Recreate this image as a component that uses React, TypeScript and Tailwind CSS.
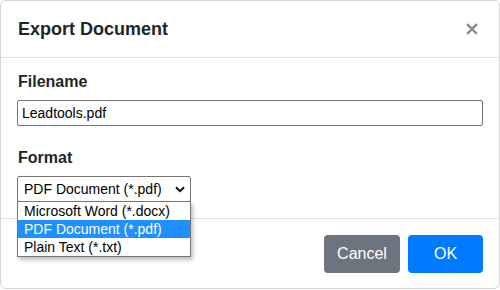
import { FC } from 'react';

const options = ['Microsoft Word (*.docx)', 'PDF Document (*.pdf)', 'Plain Text (*.txt)'];

const App: FC = () => {
  return (
    <div className="w-[500px] h-[290px] bg-white" style={{ fontFamily: '"Liberation Sans", Arial, sans-serif' }}>
      <div className="w-[500px] h-[289px] border border-[#d4d4d4] rounded-[6px] flex flex-col text-[#212529]">
        {/* header */}
        <div className="h-[57px] flex items-center justify-between pl-[17px] pr-[17px] border-b border-[#dee2e6]">
          <h2 className="text-[18px] font-bold leading-none">Export Document</h2>
          <button className="w-[20px] h-[20px] flex items-center justify-center text-[#8a8a8a]">
            <svg width="12" height="12" viewBox="0 0 12 12">
              <path d="M2 2 L10 10 M10 2 L2 10" stroke="currentColor" strokeWidth="2.4" strokeLinecap="square" />
            </svg>
          </button>
        </div>

        {/* body */}
        <div className="flex-1 px-[16px] pt-[12px] pb-[16px]">
          <div className="text-[16px] font-bold leading-[24px] mb-[6px] pl-[1px]">Filename</div>
          <div className="h-[26px] border border-[#767676] rounded-[2px] flex items-center px-[4px] text-[14px] text-black">
            Leadtools.pdf
          </div>

          <div className="text-[16px] font-bold leading-[24px] mt-[20px] mb-[6px] pl-[1px]">Format</div>
          <div className="relative w-[174px]">
            <div className="h-[26px] border border-[#767676] rounded-[2px] flex items-center justify-between pl-[6px] pr-[5px] text-[14px] text-black">
              <span>PDF Document (*.pdf)</span>
              <svg width="10" height="7" viewBox="0 0 10 7">
                <path d="M1 1.2 L5 5.2 L9 1.2" fill="none" stroke="#111" strokeWidth="2" />
              </svg>
            </div>
            <div className="absolute left-0 top-[25px] w-[174px] bg-white border border-[#767676] shadow-[2px_3px_4px_rgba(0,0,0,0.25)] z-10">
              {options.map((o, i) => (
                <div
                  key={o}
                  className={
                    i === 1
                      ? 'h-[18px] leading-[18px] pl-[6px] text-[14px] bg-[#1e90ff] text-white'
                      : 'h-[18px] leading-[18px] pl-[6px] text-[14px] text-black'
                  }
                >
                  {o}
                </div>
              ))}
            </div>
          </div>
        </div>

        {/* footer */}
        <div className="border-t border-[#dee2e6] flex justify-end gap-[8px] pt-[16px] pb-[15px] pr-[16px]">
          <button className="w-[76px] h-[38px] rounded-[4px] bg-[#6c757d] text-white text-[16px]">Cancel</button>
          <button className="w-[75px] h-[38px] rounded-[4px] bg-[#007bff] text-white text-[16px]">OK</button>
        </div>
      </div>
    </div>
  );
};

export default App;
